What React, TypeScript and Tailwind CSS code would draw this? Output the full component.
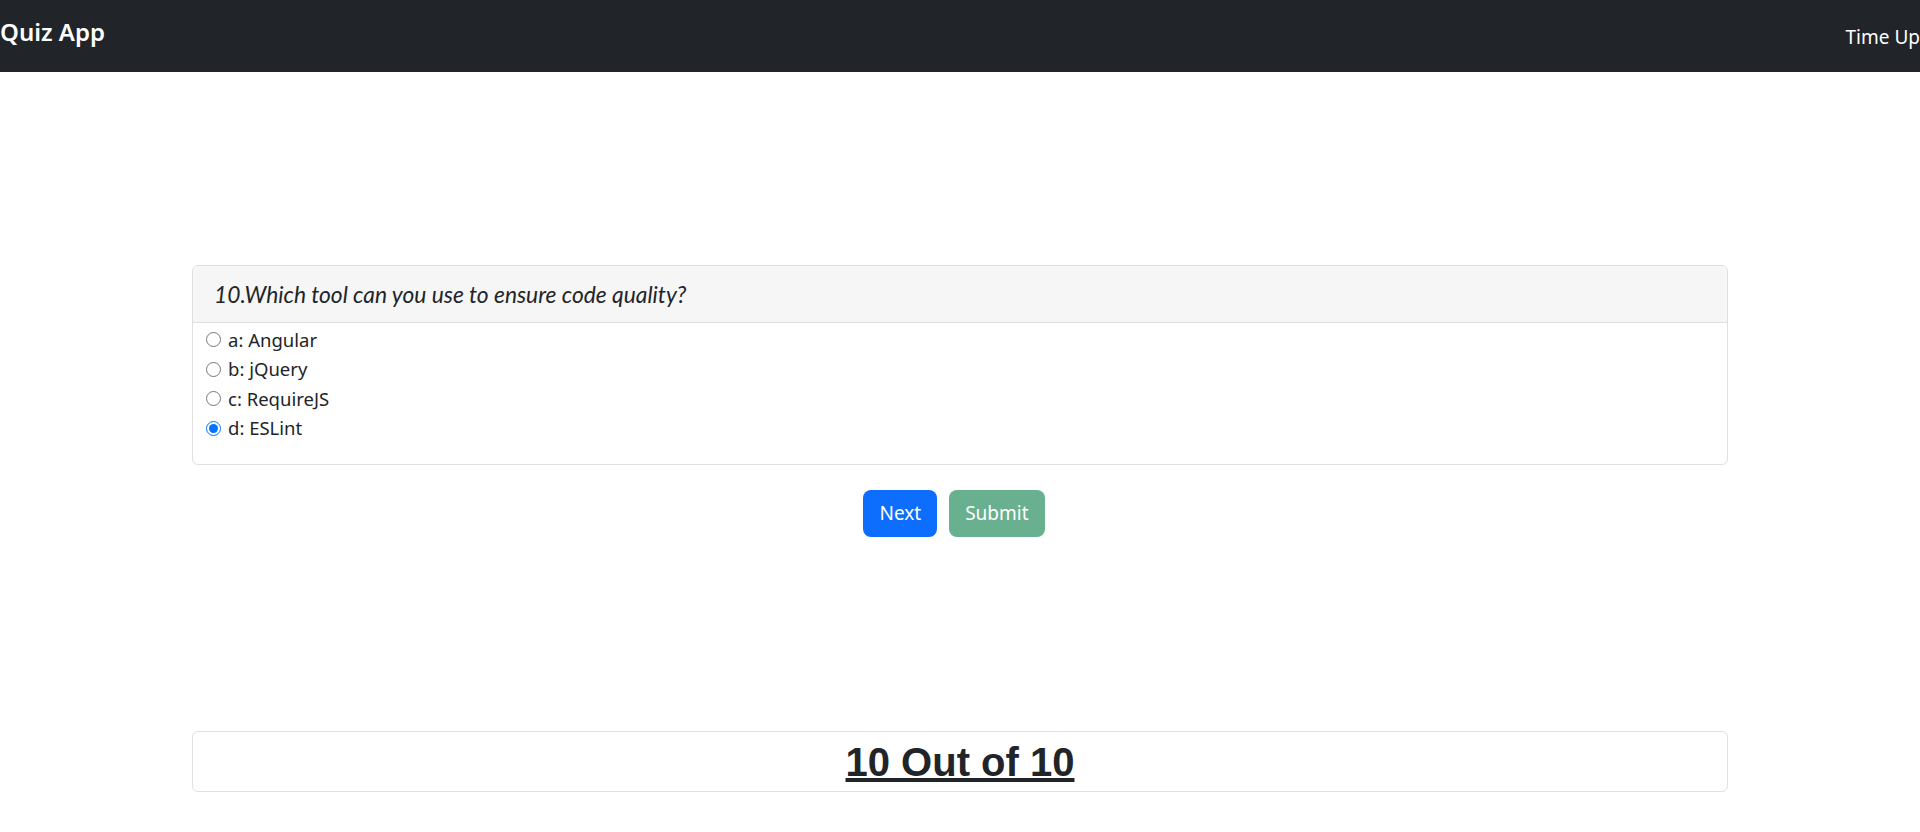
import React from "react";

const options = [
  { key: "a", label: "Angular", checked: false },
  { key: "b", label: "jQuery", checked: false },
  { key: "c", label: "RequireJS", checked: false },
  { key: "d", label: "ESLint", checked: true },
];

export default function App() {
  return (
    <div className="min-h-[832px] bg-white text-[#212529] font-['Noto_Sans',sans-serif]">
      <nav className="h-[72px] bg-[#212529] flex items-center justify-between overflow-hidden">
        <span className="text-white text-[24px] font-semibold leading-[36px] mb-[8px]">Quiz App</span>
        <span className="text-white text-[19px] leading-[28px] mt-[2px] whitespace-nowrap">Time Up</span>
      </nav>

      <div className="w-4/5 mx-auto mt-[193px] border border-[#dfdfdf] rounded-[6px] overflow-hidden">
        <div className="h-[57px] bg-[#f6f6f6] border-b border-[#dfdfdf] flex items-center pl-[21px]">
          <span className="font-['Lato',sans-serif] italic text-[22.8px] leading-[41px] text-[#212529]">
            10.Which tool can you use to ensure code quality?
          </span>
        </div>
        <div className="pt-[2px] pb-[21px]">
          {options.map((o) => (
            <label key={o.key} className="flex items-center h-[29.5px] text-[18.5px] text-[#212529]">
              <input
                type="radio"
                name="q10"
                defaultChecked={o.checked}
                className="m-0 ml-[13px] w-[15px] h-[15px]"
              />
              <span className="ml-[7px]">
                {o.key}: {o.label}
              </span>
            </label>
          ))}
        </div>
      </div>

      <div className="flex justify-center mt-[25px]">
        <button className="h-[47px] px-[16px] mr-[12px] rounded-[8px] bg-[#0d6efd] text-white text-[19px]">
          Next
        </button>
        <button
          disabled
          className="h-[47px] px-[16px] mr-[12px] rounded-[8px] bg-[#198754] opacity-65 text-white text-[19px]"
        >
          Submit
        </button>
      </div>

      <div className="w-4/5 mx-auto mt-[194px] border border-[#dfdfdf] rounded-[6px] text-center pt-[6px] pb-[5px]">
        <h1 className="font-['Liberation_Sans',Arial,sans-serif] font-bold text-[40px] leading-[48px] underline text-[#212529]">
          10 Out of 10
        </h1>
      </div>
    </div>
  );
}
